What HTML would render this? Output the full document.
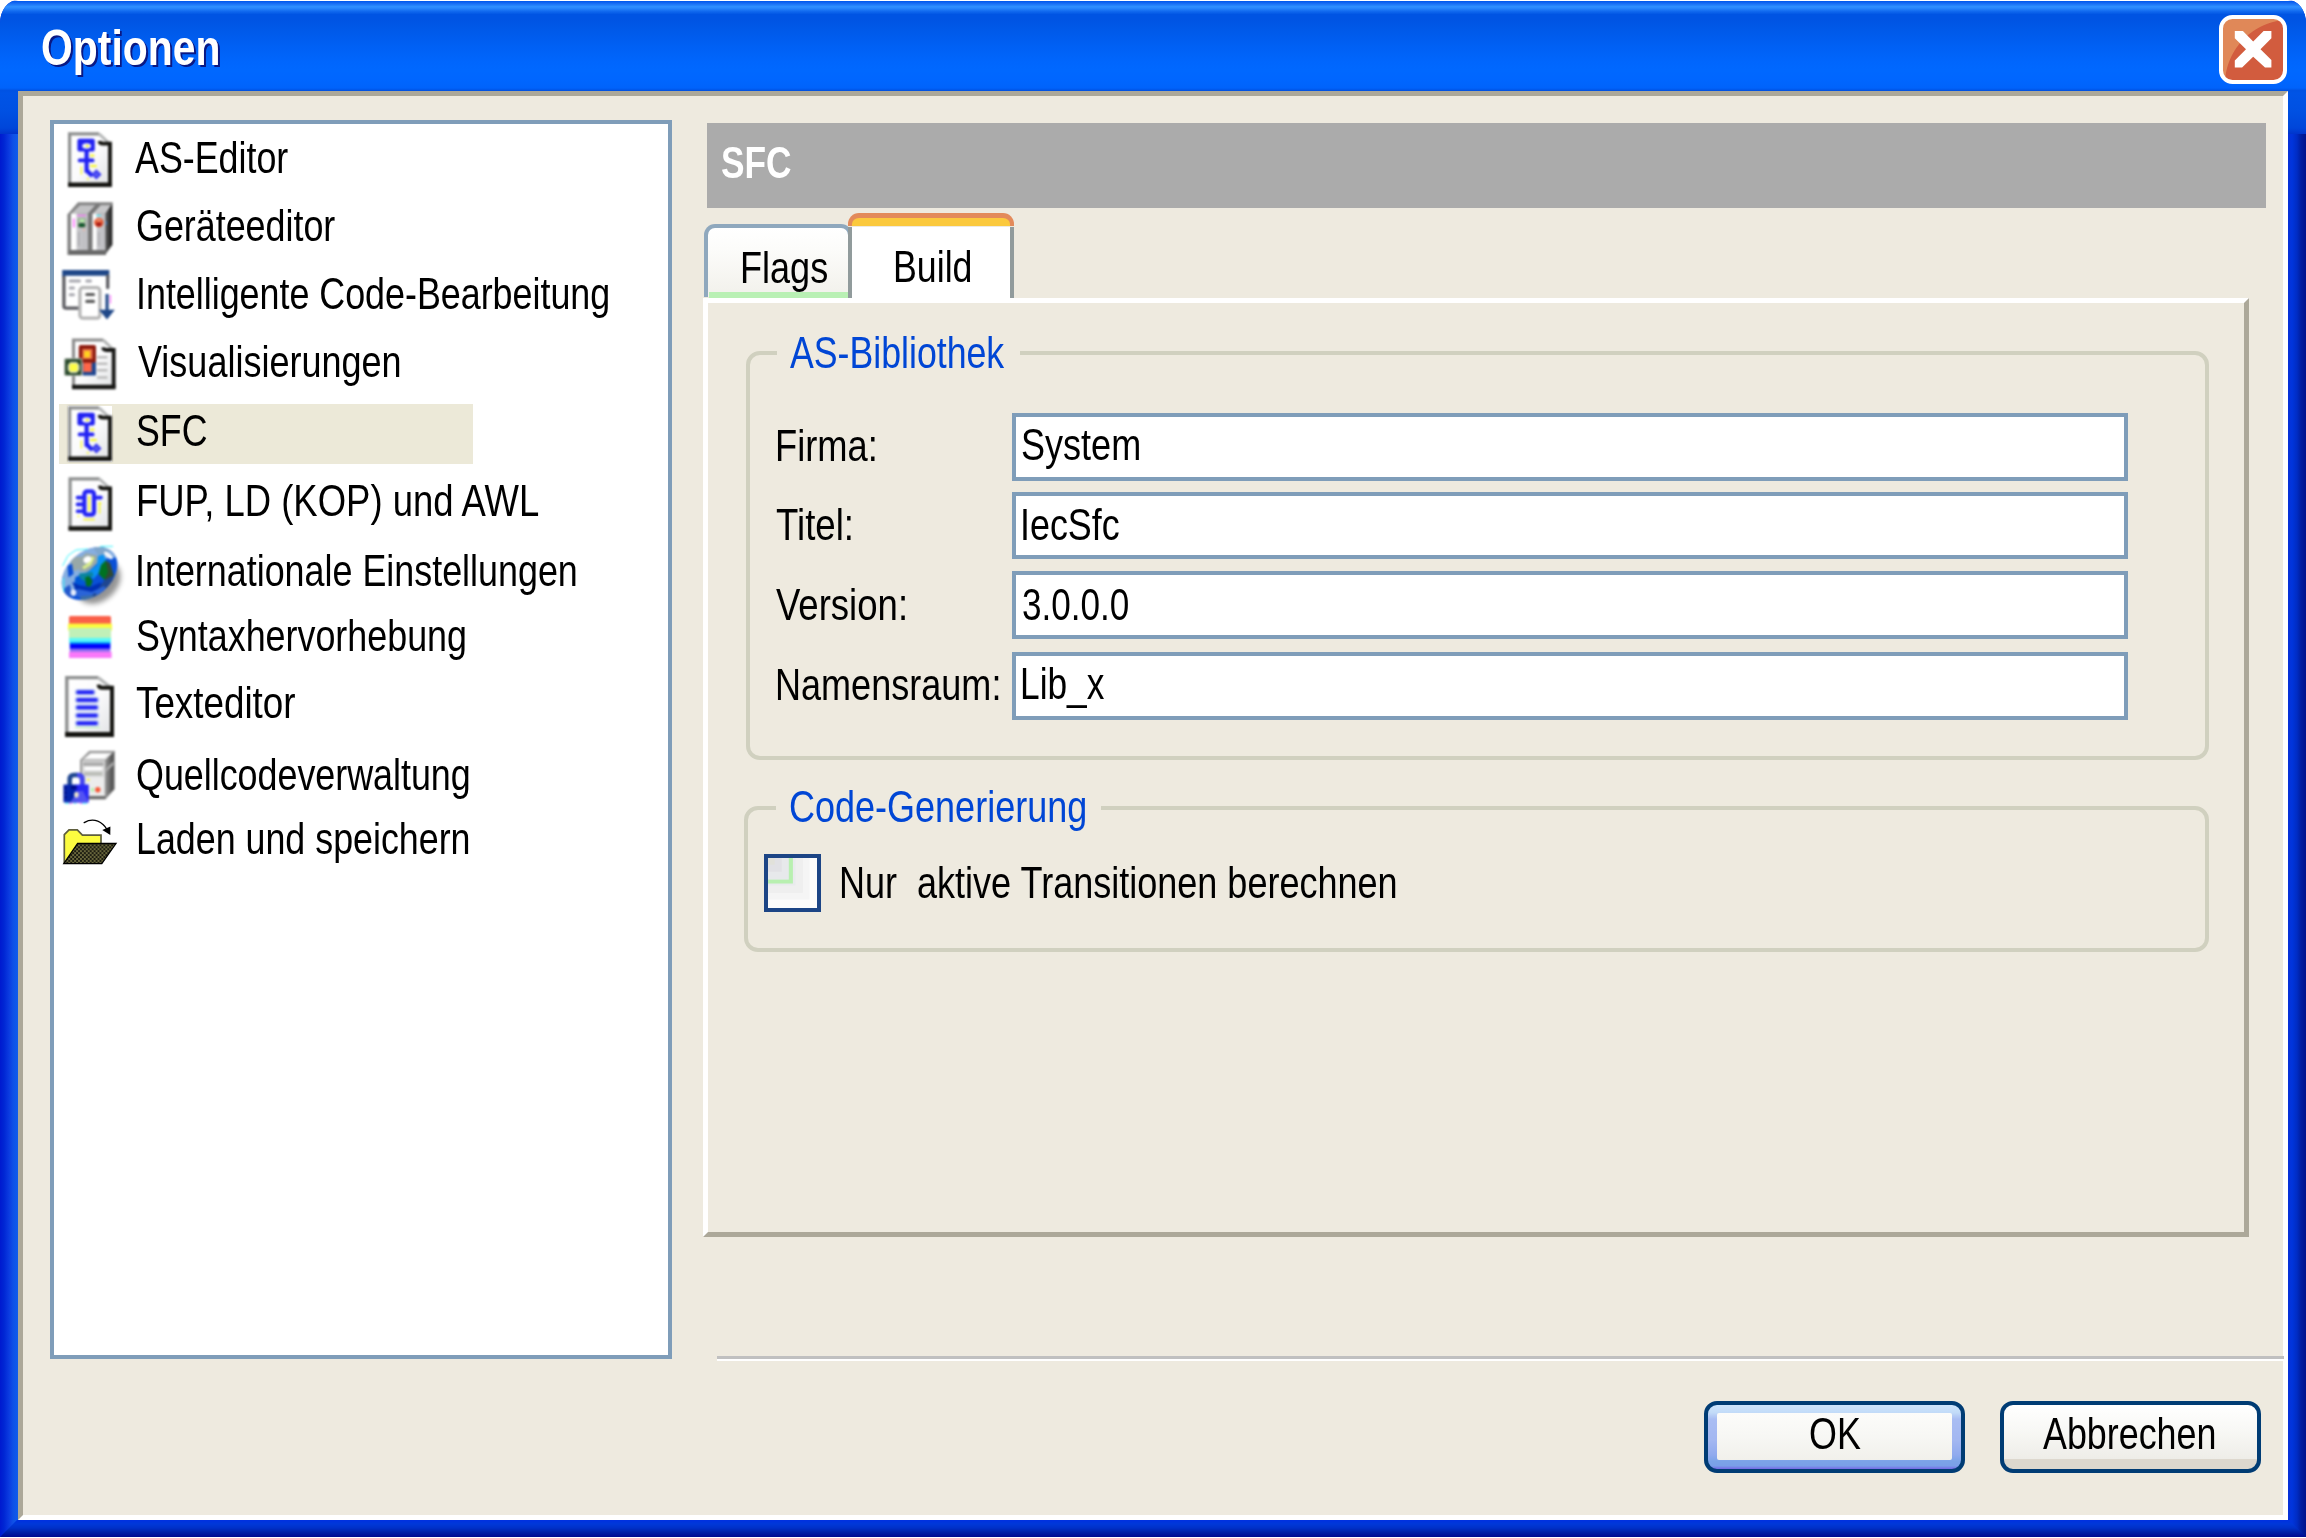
<!DOCTYPE html>
<html lang="de">
<head>
<meta charset="utf-8">
<title>Optionen</title>
<style>
html,body{margin:0;padding:0;background:#fff}
body{width:2306px;height:1538px;position:relative;overflow:hidden;font-family:"Liberation Sans",sans-serif;color:#000}
.a{position:absolute}
.t{position:absolute;white-space:pre;transform-origin:0 0;line-height:1;font-size:45px}
#win{left:0;top:0;width:2306px;height:1537px;border-radius:18px 18px 0 0/23px 23px 0 0;overflow:hidden;background:#0831d9}
#title{left:0;top:0;width:2306px;height:134px;background:linear-gradient(180deg,#fff 0,#fff .7px,#0058ee 1.3px,#1468f2 3px,#2e8fff 6.6px,#2a88fd 8px,#1068ee 11.5px,#0054e3 14.5px,#0054e3 20px,#005aea 32px,#0060f4 46px,#0066fd 62px,#0068ff 70px,#0066ff 80px,#0063fb 88px,#0052e2 90.6px,#0054e6 93px,#0050e2 112px,#0046da 128px,#0034cc 134px)}
#bl{left:0;top:134px;width:18px;height:1403px;background:linear-gradient(90deg,#0019cf 0,#0026d4 4px,#0b3be0 9px,#0f50e6 13px,#105ceb 18px)}
#br{left:2288px;top:134px;width:18px;height:1403px;background:linear-gradient(90deg,#0831d9 0,#0035dc 4px,#002cc4 9px,#001ea0 13px,#00138c 18px)}
#bb{left:0;top:1520px;width:2306px;height:17px;background:linear-gradient(180deg,#0030e0 0,#0038d8 4px,#0030c8 8px,#0020a8 12px,#000890 17px);
 clip-path:polygon(0 17px,17px 0,2289px 0,2306px 17px)}
#client{left:18px;top:91px;width:2260px;height:1419px;border:5px solid;border-color:#aca899 #fff #fff #aca899;background:#eeeadf}
#close{left:2218.7px;top:15px;width:60.7px;height:60.6px;border:4.4px solid #fff;border-radius:13.5px;background:radial-gradient(circle 65.5px at 66.9px 65.8px,#d25c3e 0,#d25c3e 98.6%,#e08858 100%)}
#list{left:50px;top:120px;width:613.6px;height:1231.1px;border:4.7px solid #7f9db9;background:#fff}
#sel{left:59px;top:404.4px;width:414px;height:60px;background:#ece9d8}
#hdr{left:707px;top:123px;width:1559px;height:85px;background:#ababab}
#pane{left:703px;top:297.6px;width:1536px;height:929.4px;border:5px solid;border-color:#fff #aca899 #aca899 #fff;background:#eeeadf}
#tab1{left:703.9px;top:223.6px;width:140px;height:69.3px;border:4.8px solid #8fa8bd;border-bottom:none;border-radius:11px 11px 0 0;background:linear-gradient(180deg,#fff 0,#fcfcfa 30%,#f3f2ed 90%)}
#tab1g{left:708.7px;top:292px;width:140px;height:5.6px;background:#b9f0b4}
#tab2{left:848.3px;top:226.7px;width:157.4px;height:70.9px;border-left:4.4px solid #919b9c;border-right:4.6px solid #919b9c;background:#fff}
#tab2o{left:848.3px;top:213px;width:157.4px;height:8.4px;border:5.3px solid #e38a5a;border-left-width:4.4px;border-right-width:4.6px;border-bottom:none;border-radius:11px 11px 0 0;background:#fbc93d}
.grp{border:4.5px solid #d0d0bf;border-radius:14px}
#g1{left:745.5px;top:351.2px;width:1455.8px;height:401px}
#g2{left:744.2px;top:805.8px;width:1456.6px;height:138.2px}
.gap{background:#eeeadf;height:9px}
.fld{left:1011.5px;width:1108px;height:59.5px;border:4.5px solid #7f9db9;background:#fff}
#cb{left:763.7px;top:854px;width:49.6px;height:49.9px;border:4.4px solid #1c4585;background:#fcfcfb;overflow:hidden}
#sep{left:717.3px;top:1355.9px;width:1567px;height:3.5px;background:#c0c0c0;border-bottom:2.2px solid #fff}
.btn{top:1400.8px;height:64.4px;border:4.4px solid #003c74;border-radius:13px;background:linear-gradient(180deg,#fff 0,#f8f8f5 40%,#eeede8 84%,#ddd8ce 85%,#ddd8ce 100%)}
#ok{left:1704.3px;width:253px;background:linear-gradient(180deg,#cde4fb 0,#c2dbf8 12%,#a9bdf3 22%,#a3b7f1 55%,#90aaee 78%,#7ba3e8 88%,#7a9fe8 95%,#7468e6 100%)}
#okr{left:9.2px;top:8.6px;right:9.2px;bottom:9.4px;border-radius:2px;background:linear-gradient(180deg,#fcfcfa 0,#f7f7f4 50%,#f1f0eb 100%)}
#cancel{left:1999.6px;width:253.2px}
.ic{filter:blur(.85px)}
</style>
</head>
<body>
<div id="win" class="a">
 <div id="title" class="a"></div>
 <div id="bl" class="a"></div>
 <div id="br" class="a"></div>
 <div id="bb" class="a"></div>
 <div id="client" class="a"></div>
 <div id="close" class="a"><svg class="a" style="left:0;top:0" width="60.4" height="60.6" viewBox="2223.1 19.2 60.4 60.6"><path d="M2234.9 31.2H2243L2253.3 41.6L2263.7 31.2H2271.5V38.5L2260.6 49.4L2271.5 60.3V67.6H2265.1L2253.3 56.9L2242.2 67.6H2234.9V60.6L2246.1 49.4L2234.9 38.5Z" fill="#fff"/></svg></div>
 <div id="list" class="a"></div>
 <div id="sel" class="a"></div>
 <div class="a" style="left:68px;top:406px;width:44px;height:55.7px;background:#fff"></div>
 <div id="hdr" class="a"></div>
 <div id="pane" class="a"></div>
 <div id="tab1" class="a"></div><div id="tab1g" class="a"></div>
 <div id="tab2" class="a"></div><div id="tab2o" class="a"></div>
 <div id="g1" class="a grp"></div>
 <div class="a gap" style="left:776.7px;top:349px;width:243.6px"></div>
 <div id="g2" class="a grp"></div>
 <div class="a gap" style="left:775.8px;top:803.6px;width:324.8px"></div>
 <div class="a fld" style="top:413px"></div>
 <div class="a fld" style="top:491.5px"></div>
 <div class="a fld" style="top:571px"></div>
 <div class="a fld" style="top:652.2px"></div>
 <div id="cb" class="a"><svg class="a" style="left:0;top:0" width="50" height="50" viewBox="0 0 50 50"><rect width="41.6" height="41.6" fill="#f5f5f5"/><rect width="34.9" height="34.9" fill="#efefef"/><rect width="27.5" height="27.5" fill="#e9ebed"/><rect width="24.9" height="25.5" fill="#b8f0b0"/><rect width="20.8" height="21.6" fill="#e7e9eb"/><rect width="13.8" height="13.8" fill="#e1e1e5"/><rect width="6.7" height="6.7" fill="#e1e1da"/></svg></div>
 <div id="sep" class="a"></div>
 <div id="ok" class="a btn"><div id="okr" class="a"></div></div>
 <div id="cancel" class="a btn"></div>

 <svg class="a ic" style="left:56px;top:124px" width="70" height="760" viewBox="56 124 70 760">
 <defs>
  <linearGradient id="pg" x1="0" y1="0" x2="1" y2="1"><stop offset="0" stop-color="#fff"/><stop offset=".5" stop-color="#fbfbfc"/><stop offset="1" stop-color="#dfe1e3"/></linearGradient>
 </defs>
 <g>
   <path d="M68 132.2H99.7L111.8 143.6V187H68Z" fill="url(#pg)"/>
   <path d="M69.6 186V133.8H99.2" fill="none" stroke="#8e9090" stroke-width="3.2"/>
   <path d="M99.2 134L110 144" fill="none" stroke="#b4b6b6" stroke-width="3"/>
   <path d="M99.6 141Q99.8 143.6 103 143.6H110V185" fill="none" stroke="#141410" stroke-width="3.8"/><path d="M68 184.7H111.9" fill="none" stroke="#141410" stroke-width="4.6"/>
   <rect x="77.4" y="138.8" width="17.4" height="12.7" rx="2" fill="#2222f2"/>
   <ellipse cx="86.6" cy="146" rx="4.4" ry="2.7" fill="#f4f6ff"/>
   <rect x="85.8" y="145" width="3" height="2" fill="#f4f41a"/>
   <rect x="84.5" y="151" width="4.2" height="21.5" fill="#2222f2"/>
   <rect x="77.8" y="158.5" width="16.6" height="3.8" rx="1.5" fill="#2222f2"/>
   <path d="M86.6 170.5L92.5 176" stroke="#2222f2" stroke-width="4.4" fill="none"/>
   <path d="M96.4 169.2L101.6 174.4L96.4 179.6L91.2 174.4Z" fill="#3c3cf0"/><rect x="94.8" y="172.8" width="3.2" height="3.2" fill="#5c5cf2" transform="rotate(45 96.4 174.4)"/>
   <rect x="90" y="154.6" width="4.5" height="2" fill="#f6f622"/>
   <rect x="90.2" y="165" width="6.5" height="2" fill="#f6f622"/>
   <rect x="80.7" y="166.5" width="1.3" height="8" fill="#f6f622"/>
   <rect x="86.8" y="178" width="2" height="1.6" fill="#f6f622"/>
 </g>
 <g transform="translate(0 274)">
   <path d="M68 132.2H99.7L111.8 143.6V187H68Z" fill="url(#pg)"/>
   <path d="M69.6 186V133.8H99.2" fill="none" stroke="#8e9090" stroke-width="3.2"/>
   <path d="M99.2 134L110 144" fill="none" stroke="#b4b6b6" stroke-width="3"/>
   <path d="M99.6 141Q99.8 143.6 103 143.6H110V185" fill="none" stroke="#141410" stroke-width="3.8"/><path d="M68 184.7H111.9" fill="none" stroke="#141410" stroke-width="4.6"/>
   <rect x="77.4" y="138.8" width="17.4" height="12.7" rx="2" fill="#2222f2"/>
   <ellipse cx="86.6" cy="146" rx="4.4" ry="2.7" fill="#f4f6ff"/>
   <rect x="85.8" y="145" width="3" height="2" fill="#f4f41a"/>
   <rect x="84.5" y="151" width="4.2" height="21.5" fill="#2222f2"/>
   <rect x="77.8" y="158.5" width="16.6" height="3.8" rx="1.5" fill="#2222f2"/>
   <path d="M86.6 170.5L92.5 176" stroke="#2222f2" stroke-width="4.4" fill="none"/>
   <path d="M96.4 169.2L101.6 174.4L96.4 179.6L91.2 174.4Z" fill="#3c3cf0"/><rect x="94.8" y="172.8" width="3.2" height="3.2" fill="#5c5cf2" transform="rotate(45 96.4 174.4)"/>
   <rect x="90" y="154.6" width="4.5" height="2" fill="#f6f622"/>
   <rect x="90.2" y="165" width="6.5" height="2" fill="#f6f622"/>
   <rect x="80.7" y="166.5" width="1.3" height="8" fill="#f6f622"/>
   <rect x="86.8" y="178" width="2" height="1.6" fill="#f6f622"/>
 </g>

 <!-- Geraeteeditor -->
 <defs>
  <linearGradient id="gside" x1="0" y1="0" x2="1" y2="0"><stop offset="0" stop-color="#5a5a5a"/><stop offset="1" stop-color="#1e1e1e"/></linearGradient>
  <linearGradient id="gfront" x1="0" y1="0" x2="1" y2="0"><stop offset="0" stop-color="#fff"/><stop offset=".28" stop-color="#fdfdfd"/><stop offset=".38" stop-color="#c6c6ca"/><stop offset="1" stop-color="#bebec2"/></linearGradient>
 </defs>
 <path d="M67.4 214.5L78 202.3H112.7V245L105 255H67.4Z" fill="#848484"/>
 <path d="M71.5 213.5L80 205.2H95.5L88 213.5Z" fill="#c2c2c4"/>
 <path d="M93 213.5L100.8 205.2H110.5L105.5 213.5Z" fill="#c8c8ca"/>
 <rect x="71" y="213.5" width="17" height="36.5" fill="url(#gfront)"/>
 <rect x="92.3" y="213.5" width="13.3" height="36.5" fill="url(#gfront)"/>
 <path d="M88 213.5L96 204.5H100.5L92.3 213.5V251H88Z" fill="#767676"/>
 <path d="M105.6 213.5L112 204.5V244.5L105.6 253Z" fill="url(#gside)"/>
 <rect x="69" y="250" width="37" height="5" fill="#6a6a6a"/>
 <rect x="77" y="217.7" width="9.6" height="10.2" rx="1.8" fill="#a2b2a2"/>
 <rect x="79.6" y="219.6" width="4.8" height="2.4" fill="#b6f6a6"/>
 <rect x="79" y="223.8" width="5.6" height="2.8" rx=".8" fill="#006a2a" stroke="#0a1a0a" stroke-width=".7"/>
 <circle cx="98.8" cy="222.6" r="4.7" fill="#e2552f"/>
 <path d="M95.6 224.5Q98.8 220.5 102 224.5Q98.8 228 95.6 224.5Z" fill="#a01818"/>
 <rect x="96.5" y="219.8" width="4.6" height="1.2" fill="#f6b49a"/>
 <rect x="83" y="229" width="1.8" height="1.8" fill="#f0b4a4"/>
 <rect x="78" y="232" width="1.5" height="14" fill="#aaaaae"/>
 <rect x="98" y="232" width="1.5" height="14" fill="#aaaaae"/>
 <rect x="77" y="215" width="9" height="1" fill="#ff5cff"/>
 <rect x="73" y="218.5" width="1.6" height="9" fill="#ff6cff"/>
 <rect x="96" y="215" width="5" height="1" fill="#3cf0ff"/>
 <rect x="106" y="221" width="1" height="4" fill="#3a78c8"/>
 <!-- Intelligente Code-Bearbeitung -->
 <rect x="65" y="275" width="42" height="32" fill="#fff"/>
 <path d="M62.2 270H109.3V277.5L106.2 275.8H65.4L62.2 277.5Z" fill="#1f4788"/>
 <path d="M63.9 276V306Q63.9 308.2 66.5 308.2H79" fill="none" stroke="#5c5c62" stroke-width="3.3"/>
 <path d="M107.7 276V287.5" fill="none" stroke="#5c5c62" stroke-width="3.3" stroke-linecap="round"/>
 <g stroke="#a9a9b0" stroke-width="3" stroke-linecap="round"><path d="M70.2 281H79.5M86.8 281H90.5M70.2 288H73.5M70.2 294.7H73.5"/></g>
 <rect x="79.9" y="287.7" width="20" height="30.5" rx="3" fill="#fff" stroke="#b6b6b6" stroke-width="3.2"/>
 <g stroke="#5c5c5c" stroke-width="3.2" stroke-linecap="round"><path d="M86.8 294.5H93.5M86.8 301.4H93.5"/></g>
 <rect x="105.5" y="294" width="3.1" height="17" fill="#1f4788"/>
 <path d="M99 309.8H114.8L107 319.6Z" fill="#1f4788"/>
 <rect x="110" y="295" width="1" height="8.5" fill="#ff5cff"/>
 <!-- Visualisierungen -->
 <path d="M71.9 338.4H103.8L115.6 350V389.2H71.9Z" fill="url(#pg)"/>
 <path d="M73.5 388.5V340H103.3" fill="none" stroke="#8e8e8e" stroke-width="3.2"/>
 <path d="M103.3 340L114 350.5" fill="none" stroke="#b2b4b4" stroke-width="3"/>
 <path d="M103.2 347.4Q103.4 350 106.4 350H113.7V387.5" fill="none" stroke="#181816" stroke-width="3.8"/><path d="M72 387H115.6" fill="none" stroke="#181816" stroke-width="4.5"/>
 <g stroke="#bcbcbc" stroke-width="2.6"><path d="M97 357.3H107.4M97 363.7H107.4M97 370.3H107.4M97 377.5H107.4"/></g>
 <rect x="82.4" y="361" width="13.6" height="14.5" rx="1" fill="#1f4690"/>
 <rect x="83.3" y="361.5" width="8.3" height="10.4" fill="#ff6648"/>
 <rect x="78.8" y="345" width="17.2" height="17.8" rx="2" fill="#8e1c10"/>
 <rect x="82.4" y="349" width="10" height="10" fill="#f0784c"/>
 <rect x="84.2" y="351" width="5.8" height="6.5" fill="#ffd21e"/>
 <rect x="64.6" y="358.7" width="17.3" height="16.8" rx="1.5" fill="#2a4a2c" stroke="#a8b2a8" stroke-width="1.2"/>
 <path d="M70.5 362H76.5L79.5 365V370L76.5 373H70.5L67.8 370V365Z" fill="#d4dcc8"/>
 <rect x="69.6" y="363.6" width="8" height="7.8" fill="#fdfd44"/>

 <!-- FUP -->
 <path d="M68.5 477.1H100L112 488.3V530.8H68.5Z" fill="url(#pg)"/>
 <path d="M70.1 530V478.8H99.6" fill="none" stroke="#8e9090" stroke-width="3.2"/>
 <path d="M99.6 479L110.3 489" fill="none" stroke="#b4b6b6" stroke-width="3"/>
 <path d="M99.9 485.6Q100 488.3 103.2 488.3H110.1V529" fill="none" stroke="#141410" stroke-width="3.8"/><path d="M68.5 528.5H112" fill="none" stroke="#141410" stroke-width="4.6"/>
 <rect x="84.4" y="491.4" width="9.6" height="23.3" rx="2.6" fill="#fdfdff" stroke="#2424f4" stroke-width="4.2"/>
 <g stroke="#2424f4" stroke-width="3.6" stroke-linecap="round"><path d="M77.5 497.6H82.4M77.5 504.4H82.4M77.5 511.2H82.4M96 497.6H101"/></g>
 <rect x="88.3" y="496" width="1.9" height="15" fill="#f6f622"/>
 <rect x="98.8" y="503" width="1.5" height="10.5" fill="#f6f622"/>
 <path d="M97.8 504L99.6 501.5L102 504Z" fill="#f6f622"/>
 <rect x="83.3" y="518.7" width="11.5" height="1.5" fill="#f6f622"/>
 <rect x="77.5" y="515.5" width="2" height="1.5" fill="#f6f622"/>
 <!-- Globe -->
 <defs>
  <clipPath id="gc"><ellipse cx="89.6" cy="573.6" rx="31.5" ry="22" transform="rotate(-41 89.6 573.6)"/></clipPath>
 </defs>
 <ellipse cx="98" cy="582" rx="25" ry="19" fill="#000" opacity=".42" style="filter:blur(2.6px)" transform="rotate(-41 98 582)"/>
 <g clip-path="url(#gc)">
  <rect x="56" y="538" width="70" height="70" fill="#0a50d6"/>
  <path d="M58 604L61 572L72 551L92 545L120 544V557L102 559L85 574L71 593Z" fill="#86aee0"/>
  <path d="M92 546L118 545L118 552L110 551L104 556L98 555Z" fill="#7fa6cc"/>
  <path d="M70.5 569L71.5 557.5L81 556.5L82.5 566L76 571Z" fill="#98a8a8"/>
  <path d="M79 571.5L80.5 558L86 553L97.5 555.5L97 563L88.5 571.5Z" fill="#98a8a8"/>
  <path d="M82 567L88 563L92 556L94.5 558L91 565L84 569.5Z" fill="#d8ec8a"/>
  <ellipse cx="87.4" cy="559.6" rx="4.2" ry="3.2" fill="#fff" transform="rotate(-30 87.4 559.6)"/>
  <path d="M67.5 566L72 563.5L73.5 574L68.5 577.5Z" fill="#0a4ed8"/>
  <path d="M86.5 573.5L97 564.5L98 556L103.5 554.5L106.5 561L100.5 571L93.5 579Z" fill="#0a92f2"/>
  <path d="M75.5 577L84 573.5L86.5 580.5L80.5 585.5L74 584.5Z" fill="#0058d8"/>
  <path d="M79 573.5L92.5 572L93.5 576.5L88 577L84.5 581.5L80 578Z" fill="#0a84a0"/>
  <path d="M85 577.5L89 576L92.6 581L90.5 586.5H86.2Z" fill="#007222"/>
  <path d="M72 582L80 585.5L90 587L100.5 582.5L102.5 588L90 592.5L76 590.5Z" fill="#0030b4"/>
  <path d="M98.5 574L101 565L105.5 560.5L111 570L111.5 578.5L104 579.5Z" fill="#007222"/>
  <path d="M105.5 560.5L110 563L113.8 575L111 583L104.5 579.5L108 572Z" fill="#304a32"/>
  <path d="M104 580.5L112 576L116 582L108 592L100 599L96 592Z" fill="#1f4690"/>
  <path d="M70 592.5L78 589L92 592L104 586L106.5 589.5L96 596.5L80 597.5Z" fill="#2a64d8"/>
  <path d="M80 596.5L100 594L96 603H82Z" fill="#3a6ea6"/>
  <path d="M63 589L70 584.5L72 596L66 601Z" fill="#2458cc"/>
  <ellipse cx="73.4" cy="592.6" rx="2.8" ry="3.4" fill="#e4ecfc"/>
  <ellipse cx="108.4" cy="555.4" rx="5.4" ry="2.2" fill="#f2f6fc" transform="rotate(40 108.4 555.4)"/>
  <rect x="93" y="593.5" width="3.6" height="3.6" fill="#1f4690" transform="rotate(45 94.8 595.3)"/>
 </g>
 <path d="M100 546.4H113M62.6 566L68 555.5L76 550L88 549" fill="none" stroke="#3cf6ff" stroke-width="1"/>
 <rect x="63.2" y="578" width="1" height="14" fill="#3cf6ff"/>
 <!-- Syntax -->
 <rect x="69" y="616.1" width="42" height="8.5" rx="1.5" fill="#fa5f48"/>
 <rect x="68" y="623.6" width="44" height="7" fill="#fcfc3c"/>
 <rect x="69" y="627.9" width="42" height="10.4" fill="#c0f0b8"/>
 <rect x="69" y="637.9" width="42" height="4.2" fill="#58f8fa"/>
 <rect x="69.6" y="642" width="41" height="2.4" fill="#0098f8"/>
 <rect x="69.8" y="644" width="40.6" height="5" fill="#0000fe"/>
 <rect x="69.8" y="648.6" width="40.6" height="3.4" fill="#9070f0"/>
 <rect x="69" y="651.8" width="42.6" height="6.2" fill="#fa78fa"/>
 <!-- Texteditor -->
 <path d="M65.1 675.9H98.8L114 687.5V737.1H65.1Z" fill="url(#pg)"/>
 <path d="M66.8 736V677.6H98.4" fill="none" stroke="#8e9090" stroke-width="3.4"/>
 <path d="M98.4 677.8L112 688.5" fill="none" stroke="#b4b6b6" stroke-width="3"/>
 <path d="M98.6 684.6Q98.8 687.8 102.4 687.8H112V735" fill="none" stroke="#141410" stroke-width="4"/><path d="M65.1 734.5H114" fill="none" stroke="#141410" stroke-width="5.2"/>
 <g stroke="#b4c2f2" stroke-width="6.4" stroke-linecap="round"><path d="M78 692.3H92.5M78 700H96M78 707.5H96M78 715.5H96M78 723.3H96"/></g>
 <g stroke="#2020f6" stroke-width="3.4" stroke-linecap="round"><path d="M78 692.3H92.5M78 700H96M78 707.5H96M78 715.5H96M78 723.3H96"/></g>
 <rect x="75" y="727" width="25" height="1" fill="#b8f4b0"/>

 <!-- Quellcodeverwaltung -->
 <defs>
  <linearGradient id="sside" x1="0" y1="0" x2="1" y2="0"><stop offset="0" stop-color="#989898"/><stop offset=".5" stop-color="#6c6c6c"/><stop offset="1" stop-color="#484848"/></linearGradient>
  <linearGradient id="lockb" x1="0" y1="0" x2="1" y2="0"><stop offset="0" stop-color="#0a2ab4"/><stop offset=".42" stop-color="#0020a8"/><stop offset=".55" stop-color="#2626f4"/><stop offset="1" stop-color="#2a2af8"/></linearGradient>
  <pattern id="dots" x="0" y="0" width="3.9" height="3.9" patternUnits="userSpaceOnUse"><rect width="3.9" height="3.9" fill="#68663c"/><circle cx="1" cy="1" r=".95" fill="#000"/><circle cx="2.95" cy="2.95" r=".95" fill="#000"/></pattern>
 </defs>
 <path d="M80 760L89.2 750.8H115V789L105.5 799.4H80Z" fill="#9c9c9c"/>
 <path d="M83 759.5L90.5 753H112L105.5 759.5Z" fill="#ececec"/>
 <path d="M86 758L91 754.6H108L104 758Z" fill="#fff"/>
 <rect x="82" y="760.5" width="23.2" height="37" fill="#d6d6d6"/>
 <rect x="83" y="762.6" width="20.5" height="3" fill="#a6a6a6"/>
 <rect x="84.5" y="766.9" width="18" height="3.4" fill="#fff"/>
 <rect x="84" y="772.6" width="18" height="2.4" fill="#b4b8b0"/>
 <rect x="84" y="777" width="20" height="19" fill="#ececec"/>
 <path d="M105.2 760.5L113.6 752V789.5L105.2 798Z" fill="url(#sside)"/>
 <path d="M105.2 769L113.6 761V765L105.2 773Z" fill="#a4a4a4"/>
 <rect x="81" y="796" width="24.5" height="3" fill="#6c6c6c"/>
 <circle cx="97.8" cy="789.8" r="2.7" fill="#f85838"/>
 <rect x="91.4" y="788" width="2.2" height="3.6" fill="#a4f29a"/>
 <rect x="87" y="779" width="2.6" height="1.6" fill="#f6f622"/>
 <path d="M69.7 786V779.5Q69.7 775 74 775H78Q82.2 775 82.2 779.5V786" fill="none" stroke="#1f4690" stroke-width="4.6"/>
 <path d="M77 775H78Q82.2 775 82.2 779.5V786" fill="none" stroke="#4646f0" stroke-width="4.6"/>
 <rect x="63.4" y="784.6" width="25.4" height="17.8" rx="1" fill="url(#lockb)"/>
 <path d="M70 802.4L78 791H83L88.8 802.4Z" fill="#5a5af2" opacity=".85"/>
 <path d="M65.5 787V800" stroke="#000a78" stroke-width="2" stroke-dasharray="2.5 2"/>
 <rect x="71" y="786.6" width="6" height="2" fill="#000078"/>
 <ellipse cx="76.4" cy="794.8" rx="2.3" ry="3" fill="#e8e2cc"/>
 <path d="M65 803.4H72M74 803.4H76M82 803.4H87" stroke="#3cf6ff" stroke-width="1"/>
 <path d="M69 803.4H72M80 803.4H82" stroke="#ff5cff" stroke-width="1"/>
 </svg>
 <svg class="a" style="left:56px;top:806px;filter:blur(.35px)" width="70" height="70" viewBox="56 806 70 70">
 <!-- Laden und speichern -->
 <path d="M64.3 863.6V834.6L69 829.9H77.3L82.4 835.2H101V844" fill="#fcfc40" stroke="#5e5e3e" stroke-width="1.7"/>
 <path d="M64.3 863.6L77.8 843.6H101.4V863.6Z" fill="#fcfc40"/>
 <path d="M77.6 843.5H116L101.8 863.7H63.8Z" fill="url(#dots)" stroke="#000" stroke-width="1.3" stroke-linejoin="miter"/>
 <path d="M84.2 822.6Q94 817 103 824.5Q105.5 826.8 106.5 828.8" fill="none" stroke="#000" stroke-width="1.3" stroke-linecap="round"/>
 <path d="M102.3 830L110.4 826.4L110.3 835Z" fill="#000"/>
 </svg>

 <div class="t" style="left:41.3px;top:23.4px;transform:scaleX(0.8096);font-size:50.5px;font-weight:bold;color:#fff;text-shadow:2.4px 2px 0.5px #0a1883">Optionen</div>
 <div class="t" style="left:135.4px;top:134.6px;transform:scaleX(0.7960)">AS-Editor</div>
 <div class="t" style="left:135.6px;top:203.1px;transform:scaleX(0.7967)">Geräteeditor</div>
 <div class="t" style="left:135.5px;top:271.4px;transform:scaleX(0.7964)">Intelligente Code-Bearbeitung</div>
 <div class="t" style="left:137.6px;top:338.9px;transform:scaleX(0.8000)">Visualisierungen</div>
 <div class="t" style="left:135.6px;top:408.1px;transform:scaleX(0.7942)">SFC</div>
 <div class="t" style="left:136.3px;top:477.9px;transform:scaleX(0.8103)">FUP, LD (KOP) und AWL</div>
 <div class="t" style="left:135.0px;top:547.9px;transform:scaleX(0.7973)">Internationale Einstellungen</div>
 <div class="t" style="left:135.6px;top:612.5px;transform:scaleX(0.7970)">Syntaxhervorhebung</div>
 <div class="t" style="left:136.4px;top:680.1px;transform:scaleX(0.8175)">Texteditor</div>
 <div class="t" style="left:135.6px;top:751.9px;transform:scaleX(0.7964)">Quellcodeverwaltung</div>
 <div class="t" style="left:135.8px;top:816.2px;transform:scaleX(0.7958)">Laden und speichern</div>
 <div class="t" style="left:721.1px;top:140.1px;transform:scaleX(0.7842);font-weight:bold;color:#fff">SFC</div>
 <div class="t" style="left:739.7px;top:245.1px;transform:scaleX(0.8015)">Flags</div>
 <div class="t" style="left:893.3px;top:244.3px;transform:scaleX(0.7943)">Build</div>
 <div class="t" style="left:790.4px;top:330.3px;transform:scaleX(0.7929);color:#0046d5">AS-Bibliothek</div>
 <div class="t" style="left:774.9px;top:422.6px;transform:scaleX(0.8066)">Firma:</div>
 <div class="t" style="left:775.5px;top:502.4px;transform:scaleX(0.8133)">Titel:</div>
 <div class="t" style="left:775.6px;top:582.4px;transform:scaleX(0.8120)">Version:</div>
 <div class="t" style="left:774.9px;top:662.2px;transform:scaleX(0.8012)">Namensraum:</div>
 <div class="t" style="left:1020.8px;top:421.5px;transform:scaleX(0.8011)">System</div>
 <div class="t" style="left:1019.6px;top:501.8px;transform:scaleX(0.7964)">IecSfc</div>
 <div class="t" style="left:1022.0px;top:581.5px;transform:scaleX(0.7802)">3.0.0.0</div>
 <div class="t" style="left:1020.0px;top:661.1px;transform:scaleX(0.7842)">Lib_x</div>
 <div class="t" style="left:788.5px;top:783.8px;transform:scaleX(0.8001);color:#0046d5">Code-Generierung</div>
 <div class="t" style="left:838.7px;top:859.7px;transform:scaleX(0.8004)">Nur  aktive Transitionen berechnen</div>
 <div class="t" style="left:1808.6px;top:1411.4px;transform:scaleX(0.7966)">OK</div>
 <div class="t" style="left:2043.3px;top:1411.4px;transform:scaleX(0.7967)">Abbrechen</div>
</div>
</body>
</html>
